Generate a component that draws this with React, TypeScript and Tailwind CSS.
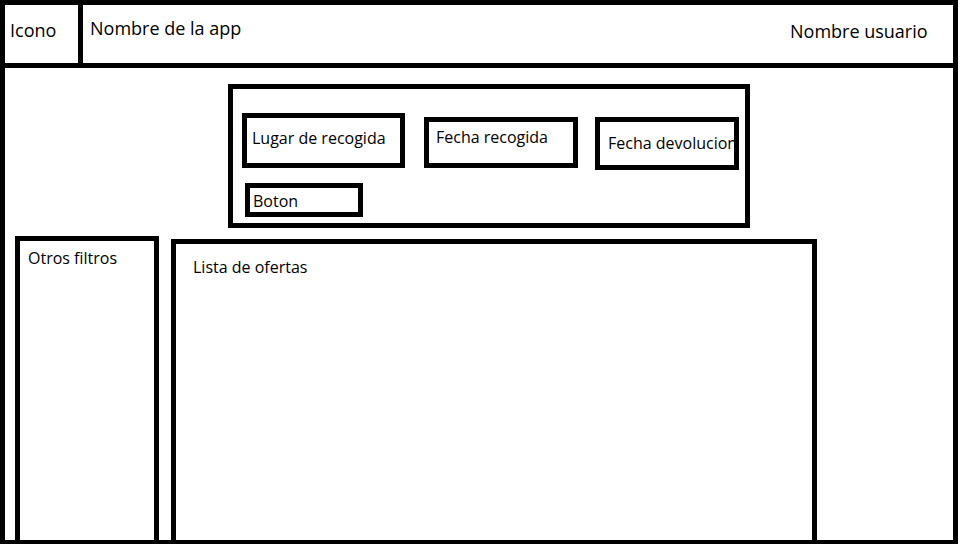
import React from "react";

const font = { fontFamily: "'Open Sans', 'Noto Sans', sans-serif" };

export default function App() {
  return (
    <div
      className="w-[958px] h-[544px] border-black border-t-[5px] border-l-[5px] border-r-[5px] border-b-[4px] bg-white text-black flex flex-col overflow-hidden text-[16px] leading-none"
      style={font}
    >
      {/* Header */}
      <div className="h-[63px] shrink-0 border-b-[5px] border-black flex text-[18px]">
        <div className="w-[78px] shrink-0 border-r-[5px] border-black pl-[5px] pt-[16px]">Icono</div>
        <div className="flex-1 pl-[7px] pt-[14px]">Nombre de la app</div>
        <div className="w-[163px] shrink-0 pt-[17px] whitespace-nowrap">Nombre usuario</div>
      </div>

      {/* Search box */}
      <div className="ml-[223px] mt-[16px] w-[522px] h-[144px] shrink-0 border-[5px] border-black flex flex-col">
        <div className="flex items-start">
          <div className="ml-[9px] mt-[24px] w-[163px] h-[55px] border-[5px] border-black pl-[5px] pt-[12px] whitespace-nowrap">
            Lugar de recogida
          </div>
          <div className="ml-[19px] mt-[28px] w-[154px] h-[51px] border-[5px] border-black pl-[7px] pt-[7px] whitespace-nowrap">
            Fecha recogida
          </div>
          <div className="ml-[17px] mt-[28px] w-[144px] h-[53px] border-[5px] border-black pl-[8px] pt-[13px] whitespace-nowrap overflow-hidden">
            Fecha devolucion
          </div>
        </div>
        <div className="ml-[12px] mt-[13px] w-[118px] h-[34px] border-[5px] border-black pl-[3px] pt-[5px]">
          Boton
        </div>
      </div>

      {/* Bottom area */}
      <div className="flex-1 min-h-0 flex items-stretch mt-[8px]">
        <div className="ml-[10px] w-[144px] border-[5px] border-b-0 border-black pl-[8px] pt-[9px] whitespace-nowrap">
          Otros filtros
        </div>
        <div className="ml-[12px] mt-[3px] w-[646px] border-[5px] border-b-0 border-black pl-[17px] pt-[15px]">
          Lista de ofertas
        </div>
      </div>
    </div>
  );
}
